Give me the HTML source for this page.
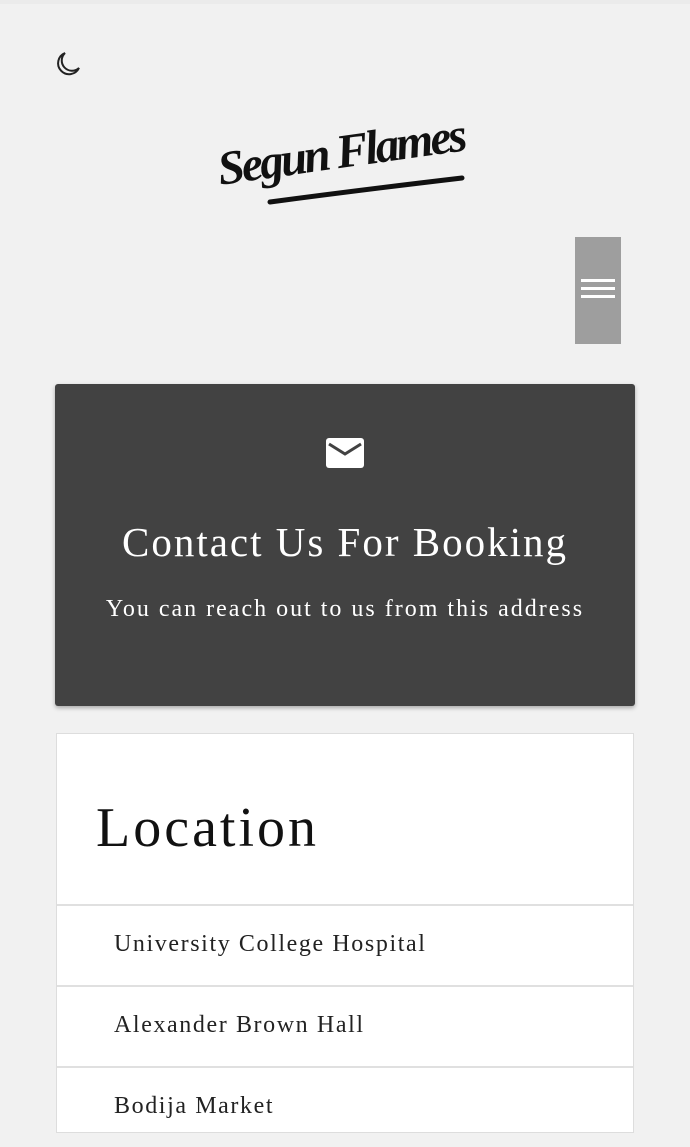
<!DOCTYPE html>
<html><head><meta charset="utf-8"><style>
*{margin:0;padding:0;box-sizing:border-box}
body{width:690px;height:1097px;overflow:hidden;background:#f1f1f1;font-family:"Liberation Serif","DejaVu Serif",serif;position:relative}
.top{position:absolute;top:0;left:0;width:690px;height:4px;background:#ebebeb}
.moon{position:absolute;left:55px;top:51px}
.logo{position:absolute;left:210px;top:112px;width:270px;height:105px}
.logo span{position:absolute;left:8px;top:30px;font-size:48px;font-style:italic;font-weight:bold;color:#111;letter-spacing:-3px;transform:rotate(-8deg);transform-origin:left center;white-space:nowrap;font-family:"Liberation Serif",serif}
.menu{position:absolute;left:575px;top:237px;width:46px;height:107px;background:#9e9e9e}
.menu i{position:absolute;left:6px;width:34px;height:3px;background:#fff}
.card{position:absolute;left:55px;top:384px;width:580px;height:322px;background:#424242;border-radius:3px;box-shadow:0 2px 4px rgba(0,0,0,.3);color:#fff;text-align:center}
.loc{position:absolute;left:56px;top:733px;width:578px;height:400px;background:#fff;border:1px solid #ddd}
.loc h1{font-weight:normal;font-size:56px;letter-spacing:3px;position:absolute;left:39px;top:62px;color:#111}
.row{position:absolute;left:0;width:576px;border-top:2px solid #e0e0e0;height:81px}
.row span{position:absolute;left:57px;top:25px;font-size:24px;letter-spacing:1.6px;color:#222}
</style></head><body>
<div class="top"></div>
<svg class="moon" width="26" height="26" viewBox="0 0 26 26"><path d="M10 2 A11 11 0 1 0 24 17 A9 9 0 0 1 10 2 Z" fill="none" stroke="#222" stroke-width="2"/></svg>
<div class="logo"><span>Segun Flames</span>
<svg width="270" height="105" style="position:absolute;left:0;top:0"><path d="M60 90 Q150 78 252 66" stroke="#111" stroke-width="5" fill="none" stroke-linecap="round"/></svg></div>
<div class="menu"><i style="top:42px"></i><i style="top:50px"></i><i style="top:58px"></i></div>
<div class="card">
<svg style="position:absolute;left:271px;top:54px" width="38" height="30" viewBox="0 0 38 30"><rect width="38" height="30" rx="3" fill="#fff"/><path d="M3 6 L19 16 L35 6" stroke="#424242" stroke-width="3" fill="none"/></svg>
<div style="position:absolute;top:134px;width:100%;font-size:41px;letter-spacing:2px">Contact Us For Booking</div>
<div style="position:absolute;top:212px;width:100%;font-size:24px;letter-spacing:2px">You can reach out to us from this address</div>
</div>
<div class="loc"><h1>Location</h1>
<div class="row" style="top:170px"><span>University College Hospital</span></div>
<div class="row" style="top:251px"><span>Alexander Brown Hall</span></div>
<div class="row" style="top:332px"><span>Bodija Market</span></div>
</div>
</body></html>
